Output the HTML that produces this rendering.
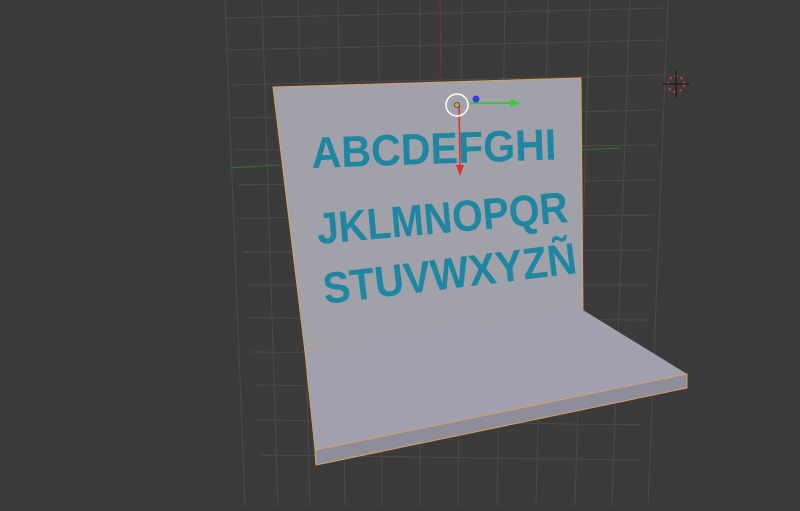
<!DOCTYPE html>
<html><head><style>html,body{margin:0;padding:0;background:#3a3a3a;overflow:hidden}</style></head><body>
<svg width="800" height="506" viewBox="0 0 800 506" xmlns="http://www.w3.org/2000/svg">
<rect width="800" height="506" fill="#3b3b3b"/>
<g stroke="#4b4b4b" stroke-width="1" fill="none">
<path d="M225 0 L245 506 M262 0 L278 506 M298 0 L310 506 M338 0 L345 506 M378 0 L382 506 M420 0 L420 506 M462 0 L458 506 M505 0 L497 506 M548 0 L536 506 M590 0 L575 506 M630 0 L612 506 M668 0 L648 506"/>
<path d="M225 18 L668 8 M227 50 L665 40 M230 85 L662 75 M232 118 L660 110 M235 150 L658 145 M238 185 L656 180 M240 218 L654 215 M243 252 L652 250 M246 285 L650 285 M248 318 L648 320 M251 352 L646 355 M254 385 L644 390 M257 420 L642 425 M260 455 L640 460"/>
</g>
<path d="M230 168 L280 165 M580 150 L620 148" stroke="#3c6a3c" stroke-width="1"/>
<path d="M440 0 L441 80" stroke="#7a3535" stroke-width="1"/>
<polygon points="273,87 581,78 583,312 305,352" fill="#a1a1a9" stroke="#d9a060" stroke-width="1"/>
<polygon points="305,352 583,310 687,374 315,450" fill="#a0a0b0"/>
<polygon points="315,450 687,374 687,388 316,465" fill="#8d8d9c" stroke="#d9a060" stroke-width="1"/>
<path d="M305,352 L315,450 L316,465" stroke="#d9a060" fill="none"/>
<g fill="#1e86a0" font-family="Liberation Sans, sans-serif" font-weight="bold">
<text x="312" y="168" font-size="44" textLength="245" lengthAdjust="spacingAndGlyphs" transform="rotate(-2 312 168)">ABCDEFGHI</text>
<text x="318" y="244" font-size="44" textLength="252" lengthAdjust="spacingAndGlyphs" transform="rotate(-5 318 244)">JKLMNOPQR</text>
<text x="325" y="304" font-size="44" textLength="255" lengthAdjust="spacingAndGlyphs" transform="rotate(-7 325 304)">STUVWXYZÑ</text>
</g>
<line x1="459" y1="106" x2="460" y2="168" stroke="#e03030" stroke-width="1.5"/>
<polygon points="456,165 464,165 460,176" fill="#e03030"/>
<line x1="470" y1="103" x2="512" y2="103" stroke="#30c030" stroke-width="1.5"/>
<polygon points="510,99 520,103 510,107" fill="#30d030"/>
<circle cx="476" cy="99" r="3.5" fill="#3040e0"/>
<circle cx="457" cy="105" r="11" fill="none" stroke="#ffffff" stroke-width="1.5"/>
<circle cx="457" cy="105" r="2.5" fill="#e0a050" stroke="#333" stroke-width="0.7"/>
<circle cx="676" cy="84" r="8" fill="none" stroke="#e04040" stroke-width="1.5" stroke-dasharray="3 3"/>
<path d="M663 84 L689 84 M676 71 L676 97" stroke="#111" stroke-width="1"/>
</svg>
</body></html>
